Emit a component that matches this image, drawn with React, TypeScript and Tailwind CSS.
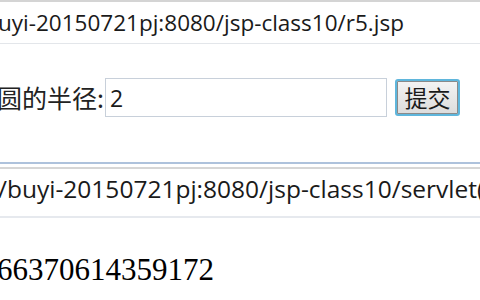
import React from 'react';

const UI_FONT = { fontFamily: '"Open Sans", "Noto Sans", sans-serif' };
const CJK_FONT = { fontFamily: '"Noto Sans CJK SC", "Noto Sans", sans-serif' };

function AddressBar({ url, className = '' }: { url: string; className?: string }) {
  return (
    <div
      className={`flex items-center overflow-hidden whitespace-nowrap bg-white text-[#1a1a1a] ${className}`}
      style={UI_FONT}
    >
      <span className="-ml-[2px]">{url}</span>
    </div>
  );
}

export default function App() {
  return (
    <div className="h-[300px] w-[480px] overflow-hidden bg-white">
      <div className="border-t-2 border-b border-t-[#d4d4d4] border-b-[#e3e6ea]">
        <AddressBar url="uyi-20150721pj:8080/jsp-class10/r5.jsp" className="h-[41px] text-[22.5px]" />
      </div>

      <form className="mt-[34px] flex items-center" onSubmit={(e) => e.preventDefault()}>
        <span className="-ml-[3px] text-[25px] leading-none text-[#222]" style={CJK_FONT}>
          圆的半径:
        </span>
        <input
          defaultValue="2"
          className="ml-[1px] h-[39px] w-[282px] border border-[#c8d0da] bg-white px-[4px] text-[23px] text-[#1a1a1a] outline-none"
          style={UI_FONT}
        />
        <button
          type="button"
          className="ml-[8px] h-[37px] w-[65px] rounded-[3px] border-2 border-[#5fb6dc] bg-gradient-to-b from-[#f4f4f4] to-[#dcdcdc] text-[23px] leading-none text-[#1a1a1a] shadow-[inset_0_0_0_1px_#8a8a8a]"
          style={CJK_FONT}
        >
          提交
        </button>
      </form>

      <div className="mt-[45px] border-t-2 border-t-[#aec2dc]">
        <div className="mt-[3px] border-t-2 border-b-2 border-t-[#d6d6d6] border-b-[#e6e9ee]">
          <AddressBar
            url="/buyi-20150721pj:8080/jsp-class10/servlet("
            className="h-[47px] pb-[6px] text-[24.5px]"
          />
        </div>
      </div>

      <p
        className="-ml-[3px] mt-[36px] text-[31px] leading-none text-black"
        style={{ fontFamily: '"Liberation Serif", serif' }}
      >
        66370614359172
      </p>
    </div>
  );
}
